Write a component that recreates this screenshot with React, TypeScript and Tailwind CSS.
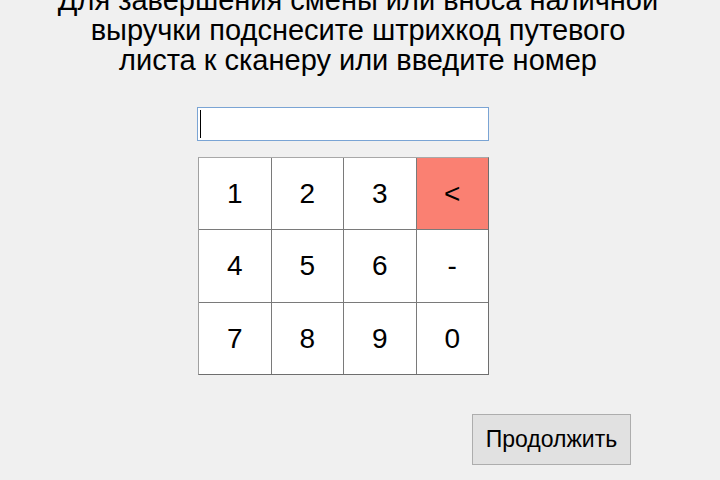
const keys = ["1", "2", "3", "<", "4", "5", "6", "-", "7", "8", "9", "0"];

export default function App() {
  return (
    <div
      className="h-[480px] w-[720px] overflow-hidden bg-[#f0f0f0] text-black"
      style={{ fontFamily: '"Liberation Sans", Arial, sans-serif' }}
    >
      <p className="-mt-[15px] pr-[4px] text-center text-[29px] leading-[30px]">
        Для завершения смены или вноса наличной
        <br />
        выручки подснесите штрихкод путевого
        <br />
        листа к сканеру или введите номер
      </p>

      <div className="ml-[197px] mt-[32px] flex h-[34px] w-[292px] items-center border border-[#7aa4d4] bg-white px-[2px]">
        <span className="h-[28px] w-px bg-black" />
      </div>

      <div className="ml-[198px] mt-[16px] grid w-[291px] grid-cols-4 grid-rows-[71px_72px_71px] gap-px border border-t-[#a8a8a8] border-l-[#a0a0a0] border-r-[#6e6e6e] border-b-[#6e6e6e] bg-[#7a7a7a]">
        {keys.map((k) => (
          <div
            key={k}
            className={`flex items-center justify-center text-[28px] ${
              k === "<" ? "bg-[#fa8072]" : "bg-white"
            }`}
          >
            {k}
          </div>
        ))}
      </div>

      <button className="ml-[472px] mt-[39px] flex h-[51px] w-[159px] items-center justify-center border border-[#adadad] bg-[#e1e1e1] text-[23px]">
        Продолжить
      </button>
    </div>
  );
}
